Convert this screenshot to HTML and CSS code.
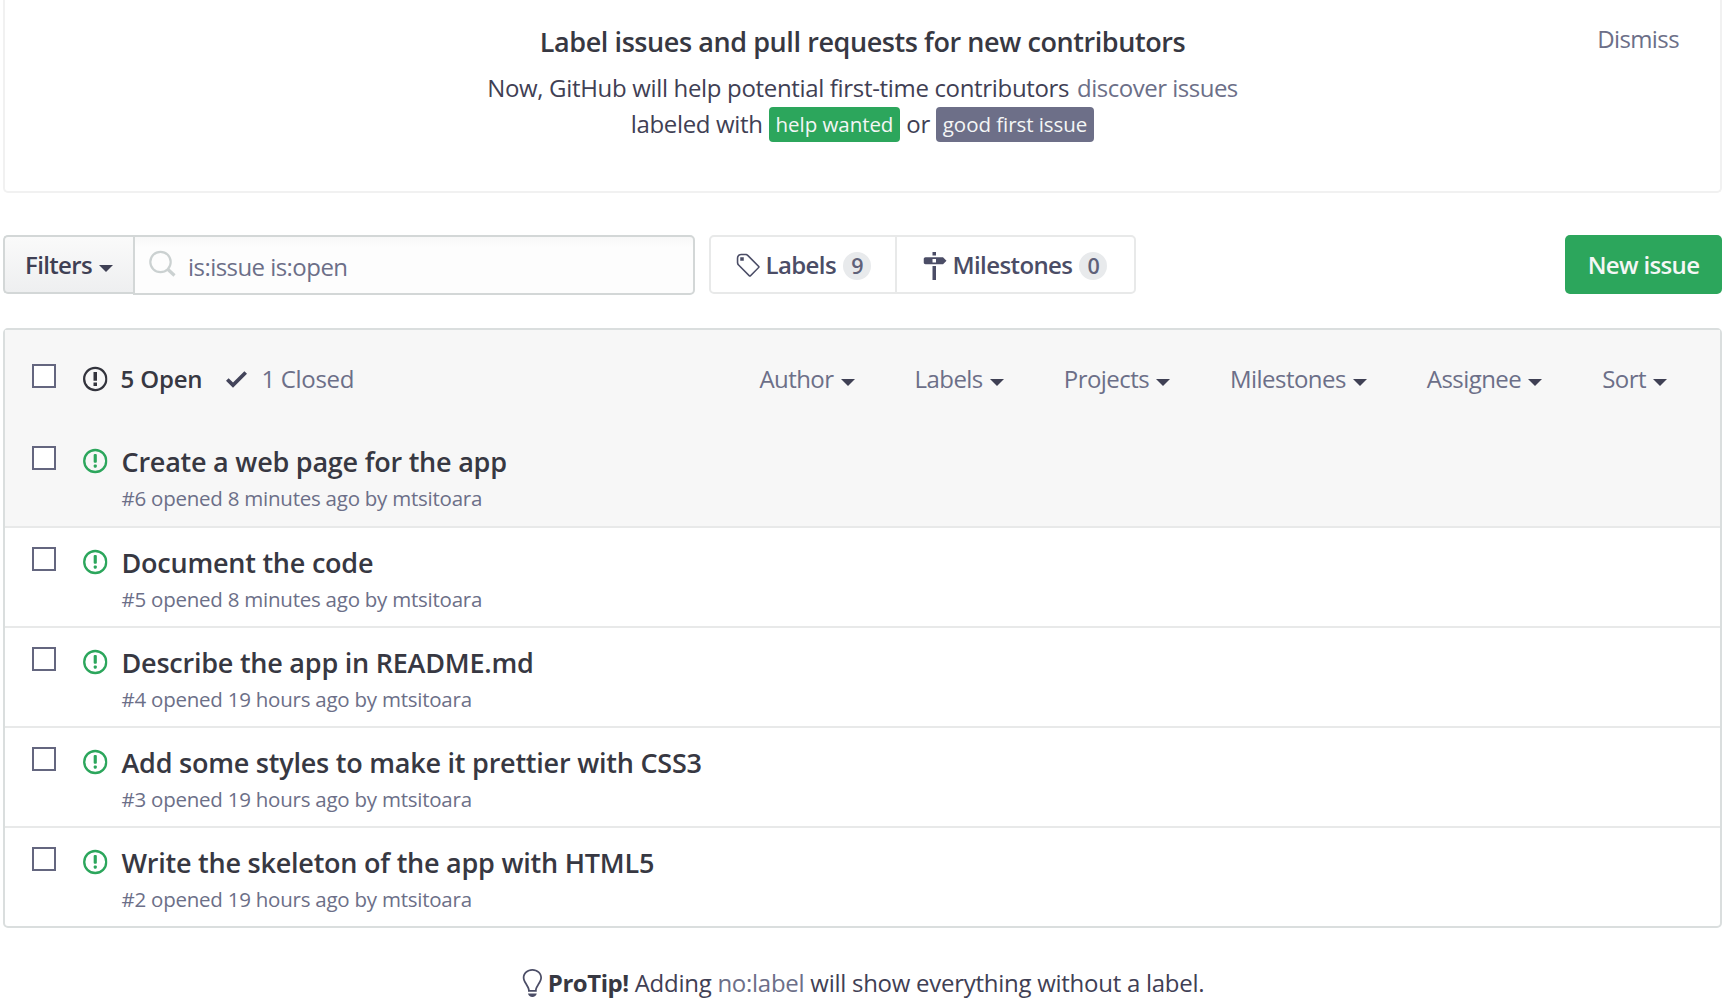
FILE: index.html
```html
<!DOCTYPE html>
<html lang="en">
<head>
<meta charset="utf-8">
<title>Issues</title>
<link rel="stylesheet" href="styles.css">
</head>
<body>
<svg class="sprite" width="0" height="0">
  <symbol id="opened" viewBox="0 0 14 16"><path d="M7 2.3c3.14 0 5.7 2.56 5.7 5.7s-2.56 5.7-5.7 5.7A5.71 5.71 0 0 1 1.3 8c0-3.14 2.56-5.7 5.7-5.7zM7 1C3.14 1 0 4.14 0 8s3.14 7 7 7 7-3.14 7-7-3.14-7-7-7zm1 3H6v5h2V4zm0 6H6v2h2v-2z"/></symbol>
  <symbol id="issue" viewBox="0 0 14 16"><circle cx="7" cy="8" r="6.3" fill="none" stroke="currentColor" stroke-width="1.35"/><rect x="6.1" y="4" width="1.8" height="5" rx=".6"/><rect x="6.1" y="10" width="1.8" height="1.8" rx=".6"/></symbol>
</svg>

<section class="banner">
  <div class="banner-text">
    <h1>Label issues and pull requests for new contributors</h1>
    <p>Now, GitHub will help potential first-time contributors <a>discover issues</a><br>labeled with <span class="tag green">help wanted</span> or <span class="tag slate">good first issue</span></p>
  </div>
  <a class="dismiss">Dismiss</a>
</section>

<div class="toolbar">
  <button class="filters">Filters<i class="caret"></i></button>
  <div class="search">
    <svg class="glass" width="28" height="28" viewBox="0 0 28 28"><circle cx="12.5" cy="12" r="10.2" stroke-width="2.2"/><path d="M20 19.5l6.5 6" stroke-width="3.2"/></svg>
    <span>is:issue is:open</span>
  </div>
  <nav class="subnav">
    <a class="sub-labels"><svg width="24.5" height="28" viewBox="0 0 14 16"><path d="M7.73 1.73C7.26 1.26 6.62 1 5.96 1H3.5C2.13 1 1 2.13 1 3.5v2.47c0 .66.27 1.3.73 1.77l6.06 6.06c.39.39 1.02.39 1.41 0l4.59-4.59a.996.996 0 0 0 0-1.41L7.73 1.73zM2.38 7.09c-.31-.3-.47-.7-.47-1.13V3.5c0-.88.72-1.59 1.59-1.59h2.47c.42 0 .83.16 1.13.47l6.14 6.13-4.73 4.73-6.13-6.15zM3.01 3h2v2H3V3h.01z"/></svg><span>Labels</span><b>9</b></a>
    <a class="sub-miles"><svg width="24.5" height="28" viewBox="0 0 14 16"><path fill-rule="evenodd" d="M8 2H6V0h2v2zm4 5H2c-.55 0-1-.45-1-1V4c0-.55.45-1 1-1h10l2 2-2 2zM8 4H6v2h2V4zM6 16h2V8H6v8z"/></svg><span>Milestones</span><b>0</b></a>
  </nav>
  <button class="new">New issue</button>
</div>

<main class="list">
  <header class="head">
    <i class="box"></i>
    <svg class="state" width="24.5" height="28"><use href="#opened"/></svg>
    <strong>5 Open</strong>
    <svg class="check" width="21" height="28" viewBox="0 0 12 16"><path d="M12 5l-8 8-4-4 1.5-1.5L4 10l6.5-6.5z"/></svg>
    <span class="closed">1 Closed</span>
    <nav class="menus">
      <a>Author<i class="caret"></i></a>
      <a>Labels<i class="caret"></i></a>
      <a>Projects<i class="caret"></i></a>
      <a>Milestones<i class="caret"></i></a>
      <a>Assignee<i class="caret"></i></a>
      <a>Sort<i class="caret"></i></a>
    </nav>
  </header>
  <article class="row hover">
    <i class="box"></i><svg class="state" width="24.5" height="28"><use href="#issue"/></svg>
    <div><h2>Create a web page for the app</h2><p>#6 opened 8 minutes ago by mtsitoara</p></div>
  </article>
  <article class="row">
    <i class="box"></i><svg class="state" width="24.5" height="28"><use href="#issue"/></svg>
    <div><h2>Document the code</h2><p>#5 opened 8 minutes ago by mtsitoara</p></div>
  </article>
  <article class="row">
    <i class="box"></i><svg class="state" width="24.5" height="28"><use href="#issue"/></svg>
    <div><h2>Describe the app in README.md</h2><p>#4 opened 19 hours ago by mtsitoara</p></div>
  </article>
  <article class="row">
    <i class="box"></i><svg class="state" width="24.5" height="28"><use href="#issue"/></svg>
    <div><h2>Add some styles to make it prettier with CSS3</h2><p>#3 opened 19 hours ago by mtsitoara</p></div>
  </article>
  <article class="row">
    <i class="box"></i><svg class="state" width="24.5" height="28"><use href="#issue"/></svg>
    <div><h2>Write the skeleton of the app with HTML5</h2><p>#2 opened 19 hours ago by mtsitoara</p></div>
  </article>
</main>

<footer class="tip">
  <svg width="21" height="28" viewBox="0 0 12 16"><path d="M6.5 0C3.48 0 1 2.19 1 5c0 .92.55 2.25 1 3 1.34 2.25 1.78 2.78 2 4v1h5v-1c.22-1.22.66-1.75 2-4 .45-.75 1-2.08 1-3 0-2.81-2.48-5-5.5-5zm3.64 7.48c-.25.44-.47.8-.67 1.11-.86 1.41-1.25 2.06-1.45 3.23-.02.05-.02.11-.02.17H5c0-.06 0-.13-.02-.17-.2-1.17-.59-1.83-1.45-3.23-.2-.31-.42-.67-.67-1.11C2.44 6.78 2 5.65 2 5c0-2.2 2.02-4 4.5-4 1.22 0 2.36.42 3.22 1.19C10.55 2.94 11 3.94 11 5c0 .66-.44 1.78-.86 2.48zM4 14h5c-.23 1.14-1.3 2-2.5 2s-2.27-.86-2.5-2z"/></svg>
  <p><strong>ProTip!</strong> Adding <a>no:label</a> will show everything without a label.</p>
</footer>
</body>
</html>
```

FILE: styles.css
```css
* { box-sizing: border-box; }
body {
  margin: 0;
  height: 1001px;
  overflow: hidden;
  padding: 0 3px;
  background: #fff;
  color: #3f4054;
  font: 24px/36px "Open Sans", "Noto Sans", sans-serif;
  letter-spacing: -.33px;
}
h1, h2, p { margin: 0; }
a { color: #6c6f88; }
svg { display: block; flex: none; fill: currentColor; }
.sprite { position: absolute; }

.banner {
  display: flex;
  justify-content: center;
  height: 193px;
  border: 2px solid #f1f1f1;
  border-top: 0;
  border-radius: 0 0 5px 5px;
  text-align: center;
  position: relative;
}
.banner-text { padding-top: 23px; }
h1 {
  color: #373842;
  font-size: 27px;
  font-weight: 600;
  line-height: 37px;
  letter-spacing: -.42px;
}
.banner p { padding-top: 10px; line-height: 36px; }
.banner p a { letter-spacing: -.5px; margin-left: 2px; }
.tag {
  display: inline-block;
  height: 35px;
  padding: 0 7px;
  border-radius: 4px;
  color: #f4f6f6;
  font-size: 20.5px;
  font-weight: 500;
  line-height: 34px;
  letter-spacing: -.05px;
  vertical-align: 1px;
}
.green { background: #2ca65c; }
.slate { background: #6d6f88; }
.dismiss {
  position: absolute;
  top: 21px;
  right: 41px;
  letter-spacing: -.6px;
}

.toolbar { display: flex; height: 60px; margin-top: 42px; align-items: flex-start; }
button {
  font: 600 24px/36px "Open Sans", "Noto Sans", sans-serif;
  letter-spacing: -.65px;
  padding: 0;
}
.caret {
  display: inline-block;
  margin-left: 7px;
  border: 7px solid transparent;
  border-top-color: #3f4054;
  border-bottom: 0;
  vertical-align: 2px;
}
.filters {
  width: 130px;
  height: 59px;
  border: 2px solid #d3d7d7;
  border-right: 0;
  border-radius: 5px 0 0 5px;
  background: linear-gradient(#fafafa, #eeeff0);
  color: #3f4054;
}
.search {
  display: flex;
  width: 562px;
  height: 60px;
  padding: 13px 0 0 13px;
  border: 2px solid #d3d7d7;
  border-radius: 0 5px 5px 0;
  background: linear-gradient(#f8f8f8, #fdfdfd 20%);
  color: #6c6f88;
  letter-spacing: -.55px;
}
.glass { fill: none; stroke: #cbd1d1; }
.search span { margin: -1px 0 0 12px; }
.subnav {
  display: flex;
  width: 427px;
  height: 59px;
  margin-left: 14px;
  border: 2px solid #e8e9e9;
  border-radius: 5px;
}
.subnav a {
  display: flex;
  padding: 15px 0 0 24px;
  color: #4b4d66;
  font-weight: 600;
  letter-spacing: -.6px;
}
.sub-labels { width: 186px; border-right: 2px solid #e8e9e9; }
.subnav .sub-miles { padding-left: 25px; }
.subnav span { margin: -5px 0 0 6px; }
.subnav b {
  width: 28px;
  height: 28px;
  margin-left: 7px;
  border-radius: 14px;
  background: #e8eaec;
  color: #5f6179;
  font-size: 21.5px;
  font-weight: 600;
  line-height: 27px;
  text-align: center;
}
.new {
  width: 157px;
  height: 59px;
  margin-left: auto;
  border: 0;
  border-radius: 5px;
  background: #2ca65c;
  color: #f4f7f5;
}

.list {
  height: 600px;
  margin-top: 33px;
  border: 2px solid #dadede;
  border-radius: 5px;
}
.head {
  display: flex;
  height: 95px;
  padding: 35px 53px 0 27px;
  background: #f7f7f7;
}
.box {
  flex: none;
  width: 24px;
  height: 24px;
  border: 2px solid #64667f;
  background: #fff;
}
.head .box { margin-top: -1px; }
.state { margin-left: 27px; }
.head .state { color: #33343d; }
.head strong {
  margin: -4px 0 0 13px;
  color: #373842;
  font-weight: 600;
  letter-spacing: -.15px;
}
.check { margin-left: 24px; color: #43445a; }
.closed { margin: -4px 0 0 14px; color: #6c6f88; }
.menus {
  display: flex;
  gap: 60px;
  margin: -4px 0 0 auto;
  letter-spacing: -.55px;
}
.row {
  display: flex;
  height: 100px;
  padding: 19px 0 0 27px;
  border-top: 2px solid #e8e9e9;
}
.row.hover { height: 101px; background: #f7f7f7; border-top-color: #f7f7f7; }
.row .state { margin-top: 1px; color: #2ca65c; }
.row div { margin: 0 0 0 14px; }
h2 {
  color: #373842;
  font-size: 27px;
  font-weight: 600;
  line-height: 36px;
  letter-spacing: -.23px;
  margin-top: -2px;
}
.row p {
  color: #6c6f88;
  font-size: 20.5px;
  line-height: 36px;
  letter-spacing: -.24px;
}

.tip { display: flex; justify-content: center; margin-top: 41px; color: #4b4d66; }
.tip p { margin: -4px 0 0 6px; color: #3f4054; letter-spacing: -.27px; }
.tip strong { color: #373842; letter-spacing: -.45px; }
```
